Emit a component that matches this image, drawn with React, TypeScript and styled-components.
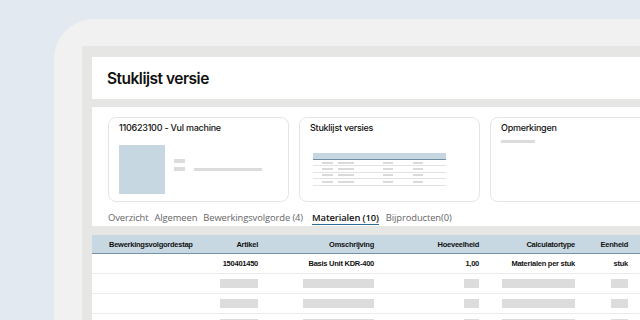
import styled, { createGlobalStyle } from "styled-components";

const GlobalStyle = createGlobalStyle`
  html, body {
    margin: 0;
    padding: 0;
    background: #e2e9f1;
    overflow: hidden;
  }
  body {
    font-family: "Inter", "Liberation Sans", sans-serif;
    color: #111;
  }
`;

const Page = styled.div`
  width: 640px;
  height: 320px;
  overflow: hidden;
  padding: 19px 0 0 54px;
  box-sizing: border-box;
`;

const Device = styled.div`
  background: #f1f1f1;
  border-top-left-radius: 40px;
  height: 100%;
  padding: 27px 0 0 28px;
  box-sizing: border-box;
`;

const Screen = styled.div`
  background: #e6e6e5;
  height: 100%;
  padding: 11px 0 0 10px;
  box-sizing: border-box;
  display: flex;
  flex-direction: column;
  gap: 8px;
`;

const Header = styled.div`
  background: #fff;
  height: 42px;
  flex: none;
  display: flex;
  align-items: center;
  padding-left: 15px;
`;

const Title = styled.h1`
  margin: 0;
  font-size: 15.5px;
  font-weight: 600;
  letter-spacing: -0.5px;
  color: #111;
`;

const Body = styled.div`
  display: flex;
  flex-direction: column;
  gap: 9px;
`;

const Top = styled.div`
  background: #fff;
  padding: 10px 0 0 16px;
`;

const Cards = styled.div`
  display: flex;
  gap: 10px;
`;

const Card = styled.div`
  flex: none;
  width: 181px;
  height: 85px;
  box-sizing: border-box;
  border: 1px solid #e5e5e5;
  border-radius: 8px;
  padding: 3px 9px 0 10px;
`;

const CardTitle = styled.div`
  font-size: 9px;
  font-weight: 500;
  letter-spacing: -0.25px;
  line-height: 13px;
  color: #111;
`;

const ProductRow = styled.div`
  display: flex;
  align-items: flex-end;
  margin-top: 11px;
  gap: 9px;
`;

const Photo = styled.div`
  width: 46px;
  height: 49px;
  background: #c7d7e1;
`;

const Specs = styled.div`
  display: flex;
  flex-direction: column;
  gap: 4px;
  margin-bottom: 23px;
`;

const Bar = styled.div<{ $w: number; $h?: number }>`
  width: ${(p) => p.$w}px;
  height: ${(p) => p.$h ?? 4}px;
  background: #dcdcdc;
`;

const SpecLine = styled.div`
  display: flex;
  align-items: flex-end;
  gap: 9px;
`;

const MiniTable = styled.div`
  width: 133px;
  margin: 19px 0 0 3px;
`;

const MiniHead = styled.div`
  height: 6px;
  background: #c7d7e1;
  border-bottom: 1px solid #6f8ea3;
`;

const MiniRow = styled.div`
  height: 5.4px;
  border-bottom: 1px solid #e3e3e3;
  display: grid;
  grid-template-columns: 9px 11px 5px 16px 29px 10px 20px 10px;
  align-items: center;
`;

const MiniBar = styled.div`
  height: 2px;
  background: #dadada;
`;

const NoteBar = styled.div`
  width: 34px;
  height: 3px;
  background: #dcdcdc;
  margin-top: 6px;
`;

const Tabs = styled.div`
  display: flex;
  gap: 6px;
  height: 24px;
  align-items: flex-end;
  padding-bottom: 1px;
  box-sizing: border-box;
`;

const Tab = styled.span<{ $active?: boolean }>`
  font-family: "Open Sans", "Liberation Sans", sans-serif;
  font-size: 9.4px;
  line-height: 12px;
  letter-spacing: -0.1px;
  color: ${(p) => (p.$active ? "#111" : "#666")};
  font-weight: ${(p) => (p.$active ? 600 : 400)};
  padding-bottom: 0;
  border-bottom: 1px solid ${(p) => (p.$active ? "#2d6e99" : "transparent")};
  margin: ${(p) => (p.$active ? "0 1px 0 3px" : "0")};
`;

const Table = styled.div`
  background: #fff;
  font-family: "Liberation Sans", Arial, sans-serif;
  font-weight: 700;
  font-size: 7.5px;
  letter-spacing: -0.25px;
  color: #111;
`;

const cols = "112px 54px 116px 105px 96px 53px 1fr";

const HeadRow = styled.div`
  display: grid;
  grid-template-columns: ${cols};
  height: 19px;
  align-items: center;
  background: #c8d8e2;
  border-bottom: 1px solid #7592a6;
  box-sizing: border-box;
`;

const Row = styled.div`
  display: grid;
  grid-template-columns: ${cols};
  height: 20px;
  align-items: center;
  border-bottom: 1px solid #ececec;
  box-sizing: border-box;
`;

const Cell = styled.div<{ $left?: boolean }>`
  white-space: nowrap;
  padding-left: ${(p) => (p.$left ? "17px" : "0")};
  display: flex;
  justify-content: ${(p) => (p.$left ? "flex-start" : "flex-end")};
`;

const Skel = styled.div<{ $w: number }>`
  width: ${(p) => p.$w}px;
  height: 9px;
  background: #dcdcdc;
`;

function SkeletonRow() {
  return (
    <Row>
      <Cell $left />
      <Cell>
        <Skel $w={38} />
      </Cell>
      <Cell>
        <Skel $w={71} />
      </Cell>
      <Cell>
        <Skel $w={15} />
      </Cell>
      <Cell>
        <Skel $w={73} />
      </Cell>
      <Cell>
        <Skel $w={17} />
      </Cell>
      <Cell />
    </Row>
  );
}

function MiniTableRow() {
  return (
    <MiniRow>
      <div />
      <MiniBar />
      <div />
      <MiniBar />
      <div />
      <MiniBar />
      <div />
      <MiniBar />
    </MiniRow>
  );
}

export default function App() {
  return (
    <>
      <GlobalStyle />
      <Page>
        <Device>
          <Screen>
            <Header>
              <Title>Stuklijst versie</Title>
            </Header>
            <Body>
              <Top>
                <Cards>
                  <Card>
                    <CardTitle>110623100 - Vul machine</CardTitle>
                    <ProductRow>
                      <Photo />
                      <Specs>
                        <Bar $w={11} />
                        <SpecLine>
                          <Bar $w={11} />
                          <Bar $w={68} $h={3} />
                        </SpecLine>
                      </Specs>
                    </ProductRow>
                  </Card>
                  <Card>
                    <CardTitle>Stuklijst versies</CardTitle>
                    <MiniTable>
                      <MiniHead />
                      <MiniTableRow />
                      <MiniTableRow />
                      <MiniTableRow />
                      <MiniTableRow />
                    </MiniTable>
                  </Card>
                  <Card>
                    <CardTitle>Opmerkingen</CardTitle>
                    <NoteBar />
                  </Card>
                </Cards>
                <Tabs>
                  <Tab>Overzicht</Tab>
                  <Tab>Algemeen</Tab>
                  <Tab>Bewerkingsvolgorde (4)</Tab>
                  <Tab $active>Materialen (10)</Tab>
                  <Tab>Bijproducten(0)</Tab>
                </Tabs>
              </Top>
              <Table>
                <HeadRow>
                  <Cell $left>Bewerkingsvolgordestap</Cell>
                  <Cell>Artikel</Cell>
                  <Cell>Omschrijving</Cell>
                  <Cell>Hoeveelheid</Cell>
                  <Cell>Calculatortype</Cell>
                  <Cell>Eenheid</Cell>
                  <Cell />
                </HeadRow>
                <Row>
                  <Cell $left />
                  <Cell>150401450</Cell>
                  <Cell>Basis Unit KDR-400</Cell>
                  <Cell>1,00</Cell>
                  <Cell>Materialen per stuk</Cell>
                  <Cell>stuk</Cell>
                  <Cell />
                </Row>
                <SkeletonRow />
                <SkeletonRow />
                <SkeletonRow />
              </Table>
            </Body>
          </Screen>
        </Device>
      </Page>
    </>
  );
}
